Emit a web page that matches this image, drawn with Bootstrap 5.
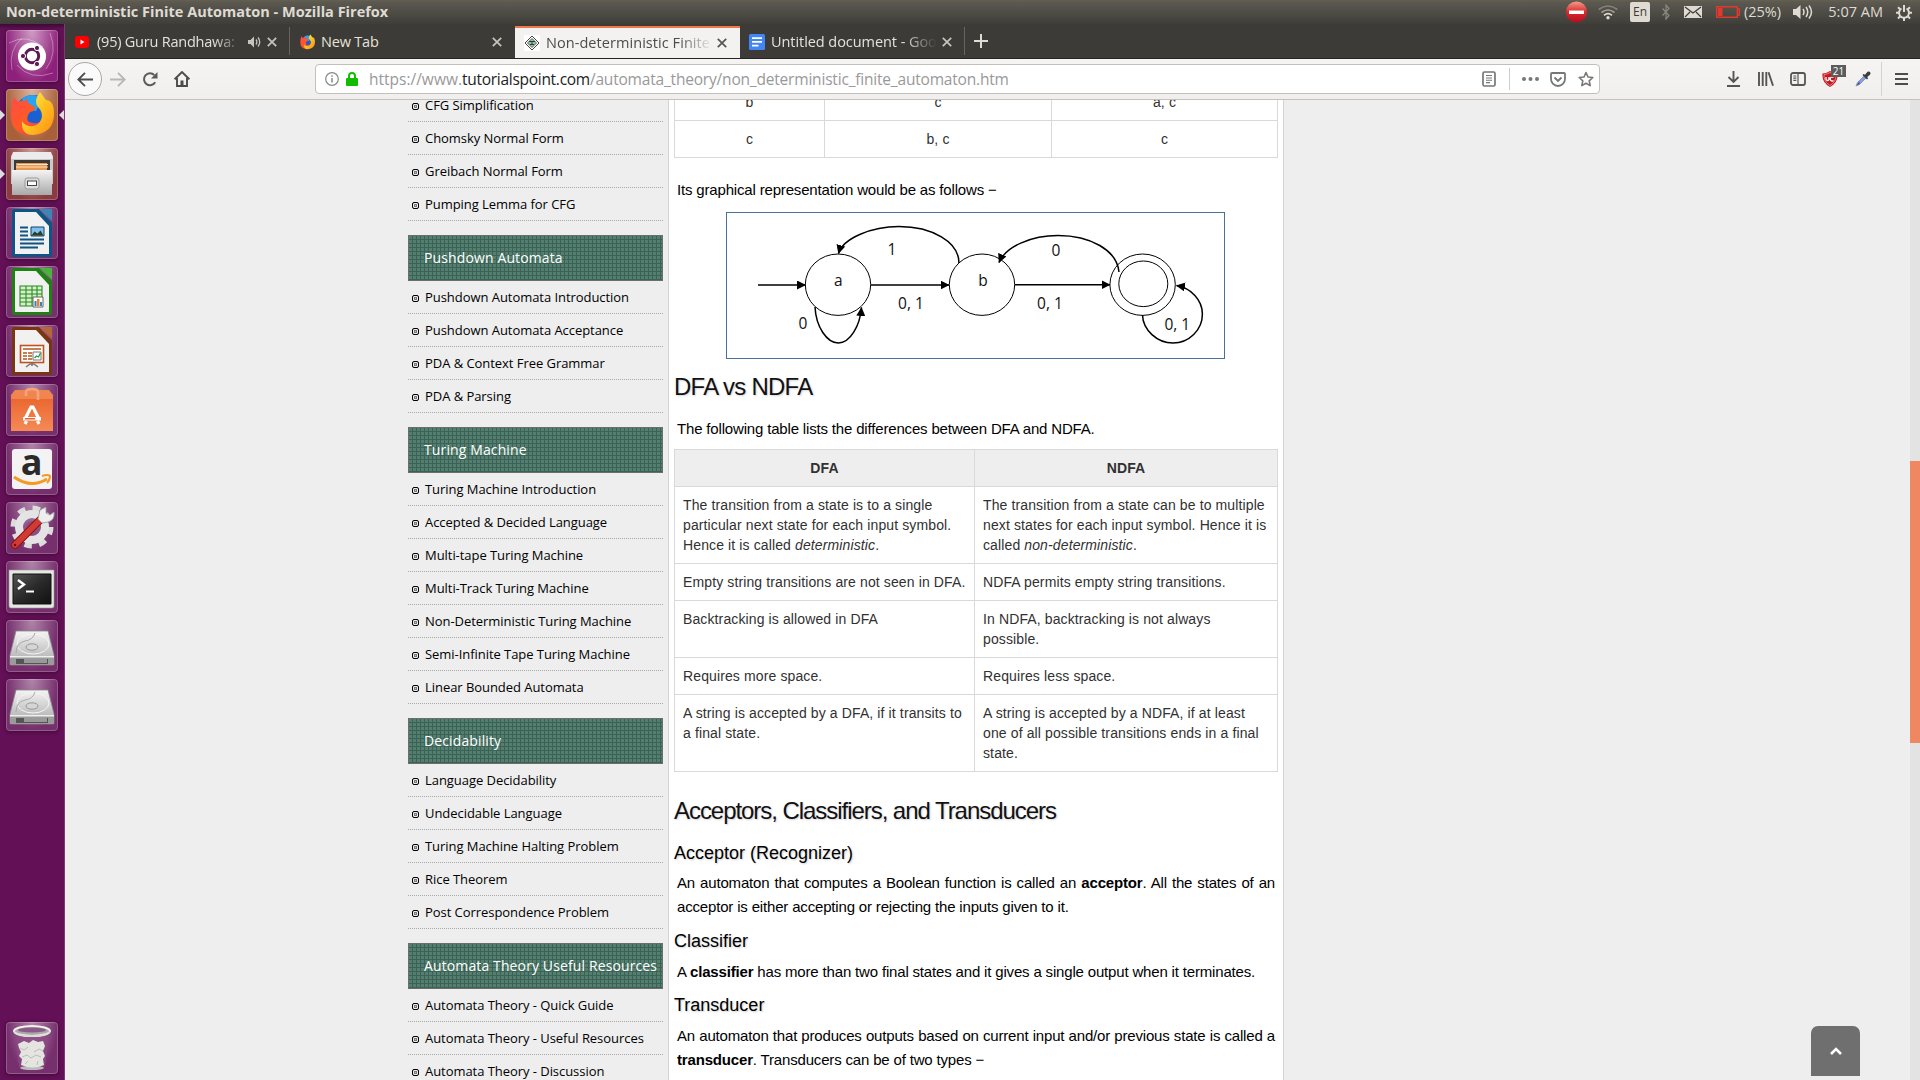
<!DOCTYPE html>
<html lang="en">
<head>
<meta charset="utf-8">
<title>Non-deterministic Finite Automaton</title>
<link href="https://cdn.jsdelivr.net/npm/bootstrap@5.3.0/dist/css/bootstrap.min.css" rel="stylesheet">
<style>
html,body{height:100%;overflow:hidden}
body{font-family:"Liberation Sans",Arial,sans-serif;background:#eee;color:#000;width:1920px;height:1080px}
svg{display:block;flex:none}
.ui{font-family:"Open Sans","Noto Sans",sans-serif}
/* desktop panel */
.panel{height:24px;background:linear-gradient(#65624f 0,#5b5950 2px,#3f3e39 24px);color:#dfdbd2;font-size:14.5px;line-height:24px;padding-left:6px}
.panel-title{font-weight:700;font-size:14.5px;white-space:nowrap;letter-spacing:.01px}
.indicators{width:354px}
.kbd-ind{width:20px;height:20px;background:#dfdbd2;color:#3c3b37;border-radius:2px;font-size:12px;line-height:20px;text-align:center}
/* launcher */
.launcher{width:65px;background:linear-gradient(#3a0a33 0,#641057 5px,#641057);border-right:1px solid #7d3a73;padding:6px 0 6px 6px;gap:7px}
.tile{width:52px;height:52px;border-radius:4px;position:relative;box-shadow:inset 0 0 0 1px rgba(255,255,255,.22),0 1px 4px rgba(0,0,0,.4);background:radial-gradient(ellipse at 50% 0,rgba(255,255,255,.45),rgba(255,255,255,.06) 70%),#6e2264}
.tile.dash{background:radial-gradient(ellipse at 50% 0,#cf9dc6,#8e1f7a 75%)}
.tile.fox{background:radial-gradient(ellipse at 50% 0,#dcb49d,#a8603a 75%)}
.tile.files{background:radial-gradient(ellipse at 50% 0,#cc9a98,#8a3b3f 75%)}
.tile svg{width:52px;height:52px}
.pip::before,.pip-r::after{content:"";position:absolute;top:21px;border:5px solid transparent}
.pip::before{left:-6px;border-left-color:#ddd;border-right:0}
.pip-r::after{right:-6px;border-right-color:#ddd;border-left:0}
/* browser chrome */
.tabstrip{height:35px;background:#3c3b37;border-bottom:1px solid #252422;color:#e6e2da;font-size:14.5px}
.tab{height:34px;padding-top:2px;white-space:nowrap}
.tab .lbl{overflow:hidden}
.tab-on{background:#f4f2f0;color:#4c4c4c;border-top:2px solid #f07746;height:32px;margin-top:2px;padding-top:0}
.fade-r{-webkit-mask-image:linear-gradient(90deg,#000 80%,transparent);mask-image:linear-gradient(90deg,#000 80%,transparent)}
.vsep{width:1px;height:28px;background:#66645f}
.toolbar{height:41px;background:linear-gradient(#f5f4f2,#f1efee);border-bottom:1px solid #c4c1be}
.backbtn{width:34px;height:34px;border-radius:50%;border:1px solid #a9a7a4;background:#fbfafa}
.urlbar{width:1285px;height:30px;background:#fff;border:1px solid #c3bfbb;border-radius:4px;font-size:15.5px;color:#999;white-space:nowrap}
.url-text{margin-left:11px;padding-top:2px}
.url-text b{font-weight:400;color:#222;letter-spacing:-.28px}
.url-path{letter-spacing:-.19px}
.ubadge{position:absolute;left:9px;top:-6px;width:15px;height:12px;background:#5c5c5c;color:#fff;font-size:10px;line-height:12px;text-align:center}
/* page */
.viewport{overflow:hidden;height:980px;background:#eee}
.sidecol{width:255px;margin-left:343px;margin-top:-11px;font-family:"Open Sans","Noto Sans",sans-serif}
.side-group{margin:0 0 14px;padding:0;list-style:none}
.side-group li{height:33px;border-bottom:1px dotted #aaa;font-size:13px;line-height:33px;padding-left:4px;white-space:nowrap;letter-spacing:-.05px}
.side-group .side-head{height:46px;border:1px solid #6d6d6d;background:repeating-linear-gradient(90deg,transparent 0 3px,#3e6055 3px 4px),repeating-linear-gradient(#518070 0 3px,#3e6055 3px 4px);color:#fff;font-size:14px;line-height:44px;padding-left:15px;letter-spacing:.12px}
.bul{display:inline-block;width:7px;height:7px;border:1px solid #000;border-radius:2px;background:#ccc;box-shadow:inset 0 0 0 1px #eee,inset 0 0 0 2px #777;margin-right:6px}
.article{width:616px;margin-left:5px;background:#fff;border:solid #d3d3d3;border-width:0 1px;padding:0 5px;height:980px}
.article table{width:604px;table-layout:fixed;font-size:14px;line-height:20px;color:#313131;border-collapse:collapse;margin:0;letter-spacing:.12px}
.article td,.article th{border:1px solid #d9d9d9;padding:8px;vertical-align:top}
.article td{padding-right:4px}
.t-top td{padding-right:8px}
.article th{background:#eee;text-align:center}
.t-top{margin-top:-17px!important}
.article p{font-size:15px;line-height:24px;padding:0 3px;margin:0;text-align:justify;letter-spacing:-.17px}
.article h2{font-size:24px;line-height:30px;font-weight:400;letter-spacing:-1.05px;margin:0;color:#121214;text-shadow:1px 1px 2px rgba(0,0,0,.18)}
.article h2.h-loose{letter-spacing:-.75px}
.article h3{font-size:18px;line-height:24px;font-weight:400;margin:0;text-shadow:1px 1px 2px rgba(0,0,0,.2)}
.graph{width:499px;height:147px;border:1px solid #4a6f98;margin:10px 0 0 52px}
.m20{margin-top:20px!important}.m13{margin-top:13px!important}.m15{margin-top:15px!important}.m8{margin-top:8px!important}.m24{margin-top:24px!important}.m6{margin-top:6px!important}.m10{margin-top:10px!important}.m7{margin-top:7px!important}.m9{margin-top:9px!important}
.scrollbar-y{width:10px;background:#e3e3e3;padding-top:361px}
.thumb{height:282px;background:#f08763}
.totop{position:absolute;left:1811px;top:1026px;width:49px;height:50px;background:#6f6f6f;border-radius:7px 7px 0 0}
</style>
<script src="https://cdn.jsdelivr.net/npm/bootstrap@5.3.0/dist/js/bootstrap.bundle.min.js"></script>
</head>
<body class="d-flex flex-column">
<svg width="0" height="0" class="position-absolute">
 <defs>
  <linearGradient id="gy" x1="0" y1="0" x2="1" y2="1"><stop offset="0" stop-color="#fff36b"/><stop offset=".5" stop-color="#ffc21f"/><stop offset="1" stop-color="#ff8a16"/></linearGradient>
  <linearGradient id="gr" x1="0" y1="0" x2="1" y2="1"><stop offset="0" stop-color="#ff4a4a"/><stop offset=".5" stop-color="#ff5a25"/><stop offset="1" stop-color="#ff2f63"/></linearGradient>
  <linearGradient id="gs" x1="0" y1="0" x2="0" y2="1"><stop offset="0" stop-color="#f4f4f4"/><stop offset="1" stop-color="#a9a9a9"/></linearGradient>
  <linearGradient id="go" x1="0" y1="0" x2="0" y2="1"><stop offset="0" stop-color="#e9642c"/><stop offset="1" stop-color="#f58a56"/></linearGradient>
  <linearGradient id="gd" x1="0" y1="0" x2="1" y2="1"><stop offset="0" stop-color="#555"/><stop offset=".5" stop-color="#2a2a2a"/><stop offset="1" stop-color="#111"/></linearGradient>
  <linearGradient id="gn" x1="0" y1="0" x2="0" y2="1"><stop offset="0" stop-color="#f59a8c"/><stop offset=".5" stop-color="#d92a2a"/><stop offset="1" stop-color="#b01020"/></linearGradient>
  <symbol id="fox" viewBox="0 0 44 46">
   <circle cx="23" cy="22" r="18" fill="#1b5fd0"/><path d="M12 8q10-8 20 0l-6 12-12-2z" fill="#27a4f2"/>
   <path d="M4 6l4 5q3-2 7-1l2-3 1 5 7 4q1 4-5 5l-2 3q-3 7 5 8 6 1 8-3 3 2 5 1-6 14-19 14Q1 41 1 24 1 13 4 6z" fill="url(#gr)"/>
   <path d="M30 1q-7 9-2 15 6 6 3 13-3 7-12 6-6-2-7-5-1 14 11 14 21-2 21-21 0-14-8-14-3-4-6-8z" fill="url(#gy)"/>
  </symbol>
  <symbol id="close" viewBox="0 0 10 10"><path d="M.8.8l8.400 8.400M9.200.8L.8 9.200" fill="none" stroke="currentColor" stroke-width="1.700"/></symbol>
  <symbol id="disk" viewBox="0 0 52 52">
   <path d="M10 11h32l6 24v9q0 1-1 1H5q-1 0-1-1v-9z" fill="url(#gs)" stroke="#888" stroke-width=".8"/>
   <path d="M4 36h44v8q0 1-1 1H5q-1 0-1-1z" fill="#9b9b9b"/><path d="M4 36h44v1.500H4z" fill="#eee"/><path d="M10 39h32v5H10z" fill="#555"/><path d="M18 39h23v4H18z" fill="#999"/>
   <ellipse cx="27" cy="24" rx="16" ry="10" fill="none" stroke="#f5f5f5"/><ellipse cx="26" cy="27" rx="6" ry="3.200" fill="#d5d5d5" stroke="#999"/><path d="M10 33q0-10 9-12 8-1 10-8" fill="none" stroke="#aaa"/>
  </symbol>
 </defs>
</svg>

<header class="panel ui d-flex flex-none align-items-center">
 <span class="panel-title">Non-deterministic Finite Automaton - Mozilla Firefox</span>
 <div class="indicators d-flex align-items-center ms-auto">
  <svg width="21" height="22" viewBox="0 0 21 22"><circle cx="10.500" cy="11" r="10.500" fill="url(#gn)"/><path d="M3 9.500h15v3.500H3z" fill="#fff"/></svg>
  <svg style="margin-left:11px;margin-right:12px" width="20" height="15" viewBox="0 0 20 15" fill="none" stroke-width="1.600"><path d="M.7 4.500Q10-2.500 19.300 4.500" stroke="#85827a"/><path d="M3.500 7.500Q10 2.500 16.500 7.500" stroke="#a29f96"/><path d="M6 10.300Q10 7 14 10.300" stroke="#dfdbd2"/><circle cx="10" cy="12.800" r="1.700" fill="#dfdbd2"/></svg>
  <span class="kbd-ind">En</span>
  <svg style="margin:0 14px 0 12px" width="8" height="16" viewBox="0 0 8 16" fill="none" stroke="#8c8980" stroke-width="1.200"><path d="M.6 4.500l6.400 7L4 15V1l3 3.500-6.400 7"/></svg>
  <svg width="18" height="12" viewBox="0 0 18 12"><rect width="18" height="12" fill="#dfdbd2"/><path d="M1 1l8 6 8-6M1 11l5-5M17 11l-5-5" fill="none" stroke="#3c3b37" stroke-width="1.200"/></svg>
  <svg style="margin-left:14px;margin-right:4px" width="24" height="12" viewBox="0 0 24 12"><path d="M.7.7h20.600v10.600H.7zM21.500 3h1.800v6h-1.800" fill="none" stroke="#e2382d" stroke-width="1.400"/><path d="M2 2h4.500v8H2z" fill="#e2382d"/></svg>
  <span>(25%)</span>
  <svg style="margin-left:auto" width="20" height="16" viewBox="0 0 20 16"><path d="M0 5h3l4.500-4v14L3 11H0z" fill="#dfdbd2"/><path d="M10 5q2 3 0 6M13 3q3.500 5 0 10M16 1.500q5 6.500 0 13" fill="none" stroke="#dfdbd2" stroke-width="1.500"/></svg>
  <span style="margin-left:15px">5:07 AM</span>
  <svg style="margin:0 8px 0 13px" width="16" height="17" viewBox="0 0 16 17" fill="none" stroke="#dfdbd2"><path d="M5.500 4.500a5 5 0 1 0 5 0" stroke-width="2"/><path d="M8 1v7" stroke-width="2"/><path d="M8 13.500V17M3.500 8.800H0M16 8.800h-3.500M4.500 12l-2.500 2.500M11.500 12l2.500 2.500M4.200 5.300L2 3.300M11.800 5.300L14 3.300" stroke-width="2"/></svg>
 </div>
</header>

<div class="d-flex flex-grow-1">
<nav class="launcher d-flex flex-column flex-shrink-0">
 <div class="tile dash"><svg viewBox="0 0 52 52"><g fill="none" stroke="#fff" stroke-opacity=".35"><path d="M3 13q18-10 34 4M44 3q8 20-4 36M47 43q-22 8-36-8M6 40Q2 20 16 8"/></g><circle cx="26" cy="26.500" r="14" fill="#fff"/><circle cx="26" cy="26" r="6.700" fill="none" stroke="#5e1a52" stroke-width="3"/><g fill="#5e1a52" stroke="#fff"><circle cx="17" cy="26" r="2.600"/><circle cx="31" cy="18" r="2.600"/><circle cx="31" cy="34" r="2.600"/></g></svg></div>
 <div class="tile fox pip pip-r"><svg viewBox="0 0 52 52"><use href="#fox" x="4" y="2" width="44" height="46"/></svg></div>
 <div class="tile files pip"><svg viewBox="0 0 52 52"><path d="M7 5h38l2 3v28H5V8z" fill="#c9c9c9"/><path d="M7 4h38l2 7H5z" fill="#ececec"/><path d="M8 12h36v10H8z" fill="#3a3a3a"/><path d="M10 15h31v7H10z" fill="#e8974e"/><path d="M11 16.500h31M10 19h32" stroke="#fbe3c4"/><path d="M6 22h40v25H6z" fill="url(#gs)"/><rect x="19" y="30" width="14" height="11" rx="2.500" fill="#ddd" stroke="#999"/><rect x="21.500" y="33" width="9" height="4.500" fill="#fff" stroke="#444"/></svg></div>
 <div class="tile"><svg viewBox="0 0 52 52"><path d="M8 2h25l13 14v32q0 2-2 2H8q-2 0-2-2V4q0-2 2-2z" fill="#0e5484"/><path d="M9 5h21l13 14v28H9z" fill="#f1f1f1"/><path d="M34 2h12v12z" fill="#3a86b8"/><path d="M14 20.500h8M14 24.500h8M14 28.500h8M14 32.500h24M14 36.500h24M14 40.500h18" stroke="#0e5484" stroke-width="1.800"/><path d="M25 20h13v9H25z" fill="#7fc1ee" stroke="#0e4468"/><path d="M25.500 28.500l3-4 3 2 3-3 3 5z" fill="#2f3d28"/></svg></div>
 <div class="tile"><svg viewBox="0 0 52 52"><path d="M8 2h25l13 14v31q0 2-2 2H8q-2 0-2-2V4q0-2 2-2z" fill="#1c8312"/><path d="M9 5h21l13 14v27H9z" fill="#f1f1f1"/><path d="M34 2h12v12z" fill="#49b33b"/><path d="M14 20h22v20H14z" fill="#d3efcb"/><path d="M14 20h22v20H14zM14 24h22M14 28h22M14 32h22M14 36h22M20 20v20M26 20v20M31 20v20" fill="none" stroke="#2a8a1e" stroke-width="1.100"/><path d="M27 31h10v10H27z" fill="#fff" stroke="#666"/><path d="M28.500 35h2v5h-2zM34 36h2v4h-2z" fill="#2a84c6"/><path d="M31 33h2.500v7H31z" fill="#e8842b"/></svg></div>
 <div class="tile"><svg viewBox="0 0 52 52"><path d="M8 2h25l13 14v32q0 2-2 2H8q-2 0-2-2V4q0-2 2-2z" fill="#7b3510"/><path d="M9 5h21l13 14v28H9z" fill="#f1f1f1"/><path d="M34 2h12v12z" fill="#b3673a"/><rect x="14.500" y="20.500" width="23" height="17" fill="#fff" stroke="#c1531c" stroke-width="1.600"/><path d="M17 24h18M17 28h4M17 31h4M17 34h4M22 28h4M22 31h4M22 34h4" stroke="#b2551f" stroke-width="1.700"/><path d="M27 27h8v8h-8z" fill="#fff" stroke="#777"/><path d="M28.500 33l2-2 2 1 2-4" fill="none" stroke="#2a9a3a" stroke-width="1.300"/><path d="M26 38v3M20 42l4-3h4l4 3" fill="none" stroke="#777" stroke-width="1.500"/></svg></div>
 <div class="tile"><svg viewBox="0 0 52 52"><path d="M5 11h42v36H5z" fill="url(#go)"/><path d="M5 11l4-5h34l4 5v4H5z" fill="#f08550"/><path d="M20 12V8q0-3 6-3t6 3v8" fill="none" stroke="#f7a27a" stroke-width="2.600"/><path d="M19 35l6-12h2l6 12M19 40l1.500-3M33 40l-1.500-3" fill="none" stroke="#fff" stroke-width="3.200"/><path d="M17 33h18v3.500H17z" fill="#fff"/><path d="M19 34h10v1.500H19z" fill="#e9642c"/></svg></div>
 <div class="tile"><svg viewBox="0 0 52 52"><rect x="6" y="6" width="40" height="40" rx="3" fill="#f3f3f3"/><text x="25.500" y="32" text-anchor="middle" font-family="Open Sans" font-weight="700" font-size="36" fill="#2a2a2a">a</text><path d="M8 34q17 12 33 2" fill="none" stroke="#f7981f" stroke-width="3"/><path d="M36 33q6-2 8 0 0 4-3 7" fill="none" stroke="#f7981f" stroke-width="2"/></svg></div>
 <div class="tile"><svg viewBox="0 0 52 52"><circle cx="26" cy="25" r="18.500" fill="none" stroke="#dcdcdc" stroke-width="6" stroke-dasharray="7.300 7.230"/><circle cx="26" cy="25" r="13" fill="none" stroke="#e4e4e4" stroke-width="8"/><circle cx="26" cy="25" r="6" fill="#8a4f80"/><path d="M9 43L36 16" stroke="#8c1410" stroke-width="8" stroke-linecap="round"/><path d="M9 43L34 18" stroke="#d13b33" stroke-width="6" stroke-linecap="round"/><path d="M32 17l2-9 6-3v6l4 2 4-3q1 8-6 10l-6 1z" fill="#eee" stroke="#999" stroke-width=".8"/><circle cx="9" cy="43" r="1.300" fill="#6d0f0b"/></svg></div>
 <div class="tile"><svg viewBox="0 0 52 52"><path d="M4 9h44v36q0 2-2 2H5q-2 0-2-2V9z" fill="#e6e6e2" stroke="#999" stroke-width=".6"/><path d="M7 13h38v30H7z" fill="url(#gd)" stroke="#111"/><path d="M12 19l6 4.500-6 4.500" fill="none" stroke="#fff" stroke-width="2.400"/><path d="M20 30.500h8" stroke="#fff" stroke-width="2"/></svg></div>
 <div class="tile"><svg><use href="#disk" width="52" height="52"/></svg></div>
 <div class="tile"><svg><use href="#disk" width="52" height="52"/></svg></div>
 <div class="tile mt-auto"><svg viewBox="0 0 52 52"><path d="M9 12h34l-4 33q-13 4-26 0z" fill="#8a4a82" fill-opacity=".7"/><ellipse cx="26" cy="46" rx="12" ry="2" fill="#bbb"/><path d="M12 22l6-3 5 2 4-3 5 2 5-1 2 5-2 5 2 5-2 3 1 6q-11 5-23 0l1-6-3-3 2-4-2-4z" fill="#e4e4e0"/><path d="M14 26l4 2 4-3M28 30l5-3 4 2M16 35l5-2 4 3 5-3 5 2M19 42l3-3M31 43l1-4" fill="none" stroke="#bdbdb8"/><ellipse cx="26" cy="9" rx="18" ry="5" fill="#aaa" stroke="#f1f1ee" stroke-width="2"/><ellipse cx="26" cy="8" rx="14" ry="2.500" fill="#8a5c85"/><path d="M8 9v2q3 4 18 4t18-4V9q-3 4-18 4T8 9z" fill="#dcdcd8"/></svg></div>
</nav>

<div class="flex-grow-1 d-flex flex-column overflow-hidden">
 <div class="tabstrip ui d-flex flex-shrink-0">
  <div class="tab d-flex align-items-center" style="width:224px;padding-left:10px">
   <svg width="14" height="12" viewBox="0 0 14 12"><rect width="14" height="12" rx="3" fill="#f00"/><path d="M5.500 3.500l4 2.500-4 2.500z" fill="#fff"/></svg>
   <span class="lbl fade-r" style="margin-left:8px;width:146px;letter-spacing:-.22px">(95) Guru Randhawa:</span>
   <svg style="margin-left:5px" width="13" height="12" viewBox="0 0 13 12"><path d="M0 4h2.500L6 .5v11L2.500 8H0z" fill="#c8c5bd"/><path d="M8 3.500q1.800 2.500 0 5M10 1.500q3.500 4.500 0 9" fill="none" stroke="#c8c5bd" stroke-width="1.300"/></svg>
   <svg style="margin-left:6px;color:#c8c5bd" width="10" height="10"><use href="#close"/></svg>
  </div>
  <span class="vsep align-self-center"></span>
  <div class="tab d-flex align-items-center" style="width:225px;padding-left:10px">
   <svg width="15" height="16"><use href="#fox"/></svg>
   <span class="lbl" style="margin-left:6px;width:168px;letter-spacing:-.2px">New Tab</span>
   <svg style="margin-left:3px;color:#c8c5bd" width="10" height="10"><use href="#close"/></svg>
  </div>
  <div class="tab tab-on d-flex align-items-center" style="width:225px;padding-left:9px">
   <svg width="16" height="16" viewBox="0 0 16 16"><rect width="16" height="16" fill="#fff"/><path d="M8 1l7 7-7 7-7-7z" fill="none" stroke="#444"/><path d="M8 3.500L12.500 8 8 12.500 3.500 8z" fill="#9dbfa9" stroke="#565"/><path d="M5 6.500h6M8 6v4M6 9.500h4" stroke="#243" stroke-width="1"/></svg>
   <span class="lbl fade-r" style="margin-left:6px;width:166px;letter-spacing:.06px">Non-deterministic Finite</span>
   <svg style="margin-left:5px;color:#555" width="10" height="10"><use href="#close"/></svg>
  </div>
  <div class="tab d-flex align-items-center" style="width:224px;padding-left:9px">
   <svg width="16" height="16" viewBox="0 0 16 16"><rect width="16" height="16" rx="1.500" fill="#4285f4"/><path d="M3 4.200h10M3 7.900h10M3 11.600h6.500" stroke="#fff" stroke-width="1.700"/></svg>
   <span class="lbl fade-r" style="margin-left:6px;width:166px;letter-spacing:-.06px">Untitled document - Goo</span>
   <svg style="margin-left:5px;color:#c8c5bd" width="10" height="10"><use href="#close"/></svg>
  </div>
  <span class="vsep align-self-center"></span>
  <svg class="align-self-center" style="margin-left:9px" width="14" height="14" viewBox="0 0 14 14"><path d="M7 0v14M0 7h14" stroke="#dedbd3" stroke-width="2"/></svg>
 </div>
 <div class="toolbar ui d-flex align-items-center flex-shrink-0">
  <div class="backbtn d-flex align-items-center justify-content-center" style="margin-left:3px"><svg width="16" height="15" viewBox="0 0 16 15" fill="none" stroke="#4c4c4c" stroke-width="1.900"><path d="M16 7.500H1.500M8 .8L1.300 7.500 8 14.200"/></svg></div>
  <svg style="margin-left:8px" width="16" height="15" viewBox="0 0 16 15" fill="none" stroke="#b9b7b5" stroke-width="1.900"><path d="M0 7.500h14.500M8 .8l6.700 6.700L8 14.200"/></svg>
  <svg style="margin-left:16px" width="16" height="16" viewBox="0 0 16 16"><path d="M13.200 11.200A6 6 0 1 1 12.300 4" fill="none" stroke="#5a5a5a" stroke-width="2"/><path d="M15.500 1v6.500H9z" fill="#5a5a5a"/></svg>
  <svg style="margin-left:16px" width="16" height="16" viewBox="0 0 16 16"><path d="M.6 8.300L8 1l7.400 7.300M3 7v8h10V7" fill="none" stroke="#4c4c4c" stroke-width="1.900"/><path d="M6.500 9.500h3V15h-3z" fill="#4c4c4c"/></svg>
  <div class="urlbar d-flex align-items-center" style="margin-left:125px;padding-left:9px">
   <svg width="14" height="14" viewBox="0 0 14 14"><circle cx="7" cy="7" r="6.300" fill="none" stroke="#888" stroke-width="1.200"/><path d="M7 6v4.500M7 3.300v1.500" stroke="#888" stroke-width="1.500"/></svg>
   <svg style="margin-left:7px" width="12" height="14" viewBox="0 0 12 14"><path d="M3 7V4q0-3 3-3t3 3v3" fill="none" stroke="#12bc00" stroke-width="2"/><rect y="6" width="12" height="8" rx="1" fill="#12bc00"/></svg>
   <span class="url-text">https://www.<b>tutorialspoint.com</b><span class="url-path">/automata_theory/non_deterministic_finite_automaton.htm</span></span>
   <div class="ms-auto d-flex align-items-center" style="width:117px">
    <svg width="14" height="16" viewBox="0 0 14 16"><rect x="1" y="1" width="12" height="14" rx="1.500" fill="none" stroke="#777" stroke-width="1.700"/><path d="M4 4.500h6M4 7h6M4 9.300h6M4 11.600h4" stroke="#777" stroke-width="1.100"/></svg>
    <span style="width:1px;height:22px;background:#ccc;margin:0 12px 0 13px"></span>
    <svg width="17" height="4" viewBox="0 0 17 4" fill="#777"><circle cx="2" cy="2" r="2"/><circle cx="8.500" cy="2" r="2"/><circle cx="15" cy="2" r="2"/></svg>
    <svg style="margin-left:11px" width="16" height="15" viewBox="0 0 16 15" fill="none" stroke="#777"><path d="M1 2q0-1 1-1h12q1 0 1 1v5a7 7 0 0 1-14 0z" stroke-width="1.800"/><path d="M4.500 5.500L8 9l3.500-3.500" stroke-width="1.900"/></svg>
    <svg style="margin-left:12px" width="16" height="16" viewBox="0 0 16 16"><path d="M8 1.500l2 4.500 4.800.5-3.600 3.300 1 4.800L8 12.200l-4.200 2.400 1-4.800L1.200 6.500 6 6z" fill="none" stroke="#777" stroke-width="1.600" stroke-linejoin="round"/></svg>
   </div>
  </div>
  <svg style="margin-left:127px" width="13" height="16" viewBox="0 0 13 16" fill="none" stroke="#555" stroke-width="1.900"><path d="M6.500 0v11M1.500 6l5 5 5-5M0 15h13"/></svg>
  <svg style="margin-left:18px" width="16" height="14" viewBox="0 0 16 14" stroke="#555" stroke-width="1.900"><path d="M1 0v14M4.700 0v14M8.300 0v14M10.500.3L15 13.700"/></svg>
  <svg style="margin-left:16px" width="16" height="14" viewBox="0 0 16 14" fill="none" stroke="#555"><rect x="1" y="1" width="14" height="12" rx="2" stroke-width="1.800"/><path d="M8 1v12M3.300 4h3M3.300 6.200h3M3.300 8.400h3" stroke-width="1.200"/></svg>
  <div class="position-relative" style="margin-left:16px"><svg width="16" height="16" viewBox="0 0 16 16"><path d="M8 0q4 2.500 7.500 2.500 1 9-7.500 13.500Q-.5 11.500.5 2.500 4 2.500 8 0z" fill="#c3191f"/><path d="M8 1.500q3 2 6 2 .5 7-6 11-6.500-4-6-11 3 0 6-2z" fill="none" stroke="#ee9a9a" stroke-width=".8"/><path d="M4 6v2q0 1.500 1.500 1.500T7 8V6M11.500 6.500a2 2 0 1 0 0 3" fill="none" stroke="#fff" stroke-width="1.300"/></svg><span class="ubadge">21</span></div>
  <svg style="margin-left:17px" width="16" height="16" viewBox="0 0 16 16"><path d="M1 15l1.500-3.500L9 5l2 2-6.500 6.500z" fill="#7f9ff0" stroke="#888" stroke-width=".8"/><path d="M2 14l2-3 1 1-2 2z" fill="#2449d8"/><path d="M7.500 4l1-1 1.500.7L12.500.8q1.500-.8 2.500.2t.2 2.500L12.300 6l.7 1.500-1 1z" fill="#3c3c3c"/></svg>
  <span style="width:1px;height:34px;background:#d5d3d1;margin:0 13px 0 10px"></span>
  <svg width="13" height="12" viewBox="0 0 13 12"><path d="M0 1h13M0 6h13M0 11h13" stroke="#4c4c4c" stroke-width="1.900"/></svg>
 </div>

 <div class="viewport d-flex">
  <aside class="sidecol flex-shrink-0">
   <ul class="side-group"><li><i class="bul"></i>CFG Simplification</li><li><i class="bul"></i>Chomsky Normal Form</li><li><i class="bul"></i>Greibach Normal Form</li><li><i class="bul"></i>Pumping Lemma for CFG</li></ul>
   <ul class="side-group"><li class="side-head">Pushdown Automata</li><li><i class="bul"></i>Pushdown Automata Introduction</li><li><i class="bul"></i>Pushdown Automata Acceptance</li><li><i class="bul"></i>PDA &amp; Context Free Grammar</li><li><i class="bul"></i>PDA &amp; Parsing</li></ul>
   <ul class="side-group"><li class="side-head">Turing Machine</li><li><i class="bul"></i>Turing Machine Introduction</li><li><i class="bul"></i>Accepted &amp; Decided Language</li><li><i class="bul"></i>Multi-tape Turing Machine</li><li><i class="bul"></i>Multi-Track Turing Machine</li><li><i class="bul"></i>Non-Deterministic Turing Machine</li><li><i class="bul"></i>Semi-Infinite Tape Turing Machine</li><li><i class="bul"></i>Linear Bounded Automata</li></ul>
   <ul class="side-group"><li class="side-head">Decidability</li><li><i class="bul"></i>Language Decidability</li><li><i class="bul"></i>Undecidable Language</li><li><i class="bul"></i>Turing Machine Halting Problem</li><li><i class="bul"></i>Rice Theorem</li><li><i class="bul"></i>Post Correspondence Problem</li></ul>
   <ul class="side-group"><li class="side-head">Automata Theory Useful Resources</li><li><i class="bul"></i>Automata Theory - Quick Guide</li><li><i class="bul"></i>Automata Theory - Useful Resources</li><li><i class="bul"></i>Automata Theory - Discussion</li></ul>
  </aside>
  <main class="article flex-shrink-0">
   <table class="t-top text-center"><colgroup><col style="width:150px"><col style="width:227px"><col></colgroup>
    <tr><td>b</td><td>c</td><td>a, c</td></tr><tr><td>c</td><td>b, c</td><td>c</td></tr></table>
   <p class="m20">Its graphical representation would be as follows −</p>
   <div class="graph"><svg width="497" height="145" viewBox="1 1 497 145" fill="none" stroke="#000" stroke-width="1.500">
    <defs><marker id="ah" viewBox="0 0 9 9" refX="8.500" refY="4.500" markerWidth="9" markerHeight="9" markerUnits="userSpaceOnUse" orient="auto"><path d="M0 0l9 4.500L0 9z" fill="#000" stroke="none"/></marker></defs>
    <g stroke-width="1"><ellipse cx="112" cy="72.700" rx="32.700" ry="30.700"/><ellipse cx="256" cy="72.700" rx="32.700" ry="30.700"/><ellipse cx="416.600" cy="72.700" rx="32.700" ry="30.700"/><ellipse cx="417.300" cy="71.800" rx="24.500" ry="22.800"/></g>
    <g marker-end="url(#ah)"><path d="M32 73H79.500"/><path d="M145 73H223"/><path d="M289 72.700H384"/><path d="M233 51C233 30 206 14.500 173 14.500C146 14.500 117 26 112.500 41.500"/><path d="M393 60C391 38 364 23.500 332 23.500C306 23.500 280 34 273 50.500"/><path d="M89 95C90 115 101 131 112.400 131C124 131 134 114 135.500 95.500"/><path d="M416.500 103C417 118 431 131 447 131C463 131 476.400 118 476.400 102C476.400 88 465 76 450.500 73.500"/></g>
    <g fill="#111" stroke="none" font-family="Open Sans" font-size="15.500" text-anchor="middle"><text x="166" y="43">1</text><text x="330" y="44">0</text><text x="112.400" y="74">a</text><text x="257" y="74">b</text><text x="185" y="97.300">0, 1</text><text x="324" y="97.300">0, 1</text><text x="77" y="117.300">0</text><text x="451.300" y="118">0, 1</text></g>
   </svg></div>
   <h2 class="m13 h-loose">DFA vs NDFA</h2>
   <p class="m15">The following table lists the differences between DFA and NDFA.</p>
   <table class="m8"><colgroup><col style="width:300px"><col></colgroup>
    <tr><th>DFA</th><th>NDFA</th></tr>
    <tr><td>The transition from a state is to a single<br>particular next state for each input symbol.<br>Hence it is called <em>deterministic</em>.</td><td>The transition from a state can be to multiple<br>next states for each input symbol. Hence it is<br>called <em>non-deterministic</em>.</td></tr>
    <tr><td>Empty string transitions are not seen in DFA.</td><td>NDFA permits empty string transitions.</td></tr>
    <tr><td>Backtracking is allowed in DFA</td><td>In NDFA, backtracking is not always<br>possible.</td></tr>
    <tr><td>Requires more space.</td><td>Requires less space.</td></tr>
    <tr><td>A string is accepted by a DFA, if it transits to<br>a final state.</td><td>A string is accepted by a NDFA, if at least<br>one of all possible transitions ends in a final<br>state.</td></tr>
   </table>
   <h2 class="m24">Acceptors, Classifiers, and Transducers</h2>
   <h3 class="m15">Acceptor (Recognizer)</h3>
   <p class="m6">An automaton that computes a Boolean function is called an <b>acceptor</b>. All the states of an acceptor is either accepting or rejecting the inputs given to it.</p>
   <h3 class="m10">Classifier</h3>
   <p class="m7">A <b>classifier</b> has more than two final states and it gives a single output when it terminates.</p>
   <h3 class="m9">Transducer</h3>
   <p class="m7">An automaton that produces outputs based on current input and/or previous state is called a <b>transducer</b>. Transducers can be of two types −</p>
  </main>
  <div class="scrollbar-y ms-auto"><div class="thumb"></div></div>
 </div>
</div>
</div>
<a class="totop d-flex align-items-center justify-content-center"><svg width="12" height="8" viewBox="0 0 12 8"><path d="M1 7l5-5 5 5" fill="none" stroke="#fff" stroke-width="2.600"/></svg></a>
</body>
</html>
